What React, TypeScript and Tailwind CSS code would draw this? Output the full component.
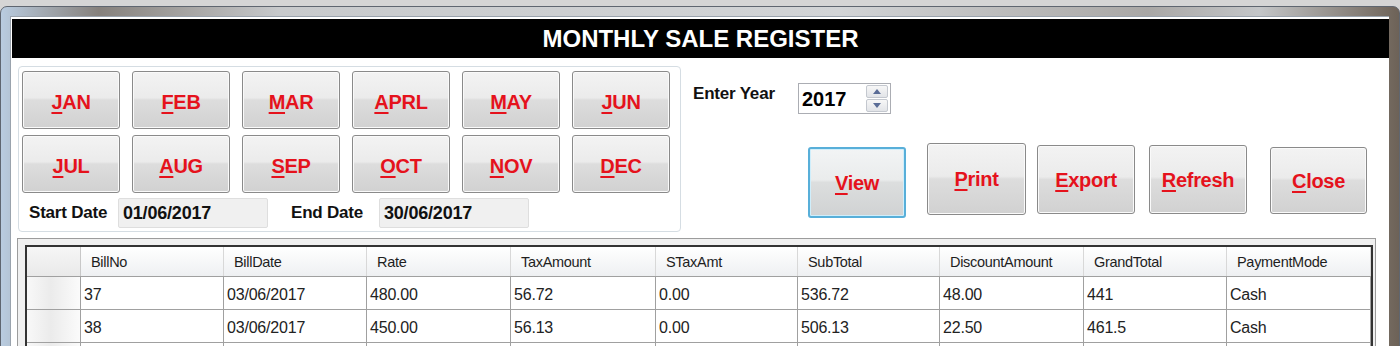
import React from "react";

const months = [
  ["J", "AN"], ["F", "EB"], ["M", "AR"], ["A", "PRL"], ["M", "AY"], ["J", "UN"],
  ["J", "UL"], ["A", "UG"], ["S", "EP"], ["O", "CT"], ["N", "OV"], ["D", "EC"],
];

const columns = ["BillNo", "BillDate", "Rate", "TaxAmount", "STaxAmt", "SubTotal", "DiscountAmount", "GrandTotal", "PaymentMode"];

const rows = [
  ["37", "03/06/2017", "480.00", "56.72", "0.00", "536.72", "48.00", "441", "Cash"],
  ["38", "03/06/2017", "450.00", "56.13", "0.00", "506.13", "22.50", "461.5", "Cash"],
  ["", "", "", "", "", "", "", "", ""],
];

const btn =
  "flex items-center justify-center rounded-[3px] border border-[#8a8a8a] bg-[linear-gradient(to_bottom,#f3f3f3_0%,#ebebeb_46%,#dddddd_50%,#d1d1d1_100%)] shadow-[inset_0_0_0_1px_#fafafa] text-[20px] font-bold text-[#e5121c]";

function Mnemonic({ first, rest }: { first: string; rest: string }) {
  return (
    <span className="tracking-[-0.3px]">
      <span className="underline decoration-[1.5px] underline-offset-[3px]">{first}</span>
      {rest}
    </span>
  );
}

function Spinner() {
  return (
    <div className="flex h-[27px] w-[22px] flex-col gap-[1px]">
      {[0, 1].map((i) => (
        <div
          key={i}
          className="flex flex-1 items-center justify-center rounded-[2px] border border-[#c4c8cf] bg-[linear-gradient(to_bottom,#f7f7f7,#e2e4e8)]"
        >
          <svg width="8" height="5" viewBox="0 0 8 5">
            {i === 0 ? (
              <polygon points="0,5 8,5 4,0" fill="#5a6c96" />
            ) : (
              <polygon points="0,0 8,0 4,5" fill="#5a6c96" />
            )}
          </svg>
        </div>
      ))}
    </div>
  );
}

export default function App() {
  return (
    <div className="h-[346px] w-[1400px] overflow-hidden bg-[#d5d5d5] pt-[6px] font-['Liberation_Sans',Arial,sans-serif]">
      <div className="h-[360px] rounded-t-[7px] border border-[#5f6670] bg-[linear-gradient(to_right,#b9cce0_0%,#a3aab2_3%,#86817c_7%,#c8cacc_20%,#d2d4d6_60%,#a9a7a5_82%,#c4c6c8_90%,#6d6257_100%)] pl-[9px] pr-[10px] pt-[9px]">
        <div className="h-full border-l border-t border-[#9aa3ad] bg-white pl-[1px] pt-[2px]">
          <div className="flex h-[39px] items-center justify-center bg-black text-[24px] font-bold text-white">
            MONTHLY SALE REGISTER
          </div>

          <div className="ml-[6px] mt-[8px] flex">
            <div className="h-[166px] w-[663px] rounded-[4px] border border-[#d5dde3] pl-[3px] pt-[4px]">
              <div className="grid grid-cols-[repeat(6,98px)] gap-x-[12px] gap-y-[6px]">
                {months.map(([f, r], i) => (
                  <button key={i} className={`${btn} h-[58px] pt-[3px]`}>
                    <Mnemonic first={f} rest={r} />
                  </button>
                ))}
              </div>
              <div className="mt-[5px] flex items-center text-[17px] font-bold tracking-[-0.2px] text-[#111]">
                <span className="ml-[7px] w-[89px]">Start Date</span>
                <div className="flex h-[30px] w-[150px] items-center rounded-[2px] border border-[#dedede] bg-[#f0f0f0] pl-[4px] text-[18px]">
                  01/06/2017
                </div>
                <span className="ml-[23px] w-[88px]">End Date</span>
                <div className="flex h-[30px] w-[150px] items-center rounded-[2px] border border-[#dedede] bg-[#f0f0f0] pl-[4px] text-[18px]">
                  30/06/2017
                </div>
              </div>
            </div>

            <div className="ml-[12px] flex flex-col">
              <div className="mt-[17px] flex items-start">
                <span className="mt-[1px] w-[105px] text-[17px] font-bold leading-[20px] tracking-[-0.2px] text-[#111]">Enter Year</span>
                <div className="flex h-[31px] w-[93px] items-center justify-between border border-[#abadb3] bg-white pl-[3px] pr-[2px] text-[20px] font-bold text-black">
                  2017
                  <Spinner />
                </div>
              </div>
              <div className="flex items-start">
                <button className="ml-[115px] mt-[33px] flex h-[71px] w-[98px] items-center justify-center rounded-[3px] border-2 border-[#58afd9] bg-[linear-gradient(to_bottom,#f2f4f5_0%,#eaecec_46%,#dcdede_50%,#d0d2d3_100%)] shadow-[inset_0_0_0_1px_#cfeefb] text-[20px] font-bold text-[#e5121c]">
                  <Mnemonic first="V" rest="iew" />
                </button>
                <button className={`${btn} ml-[21px] mt-[29px] h-[72px] w-[99px]`}>
                  <Mnemonic first="P" rest="rint" />
                </button>
                <button className={`${btn} ml-[11px] mt-[31px] h-[69px] w-[98px]`}>
                  <Mnemonic first="E" rest="xport" />
                </button>
                <button className={`${btn} ml-[14px] mt-[31px] h-[69px] w-[98px]`}>
                  <Mnemonic first="R" rest="efresh" />
                </button>
                <button className={`${btn} ml-[23px] mt-[33px] h-[67px] w-[97px]`}>
                  <Mnemonic first="C" rest="lose" />
                </button>
              </div>
            </div>
          </div>

          <div className="ml-[5px] mt-[6px] h-[140px] w-[1359px] border-l border-t border-r border-[#9c9c9c] bg-[#f0f0f0] pl-[7px] pt-[6px]">
            <div className="w-[1348px] border-l-2 border-r-2 border-t-2 border-[#333] bg-white">
              <div className="grid h-[30px] grid-cols-[54px_143px_143px_144px_145px_142px_142px_144px_143px_144px] border-b border-[#a0a0a0]">
                <div className="border-r border-[#c8c8c8] bg-[linear-gradient(to_bottom,#f6f6f6,#e9e9e9)]" />
                {columns.map((c) => (
                  <div
                    key={c}
                    className="flex items-center border-r border-[#d8d8d8] bg-[linear-gradient(to_bottom,#ffffff,#eef0f2)] pl-[10px] pt-[3px] text-[14.5px] tracking-[-0.3px] text-[#1e1e1e]"
                  >
                    {c}
                  </div>
                ))}
              </div>
              {rows.map((r, ri) => (
                <div
                  key={ri}
                  className="grid h-[33px] grid-cols-[54px_143px_143px_144px_145px_142px_142px_144px_143px_144px] border-b border-[#a0a0a0]"
                >
                  <div className="border-r border-[#a0a0a0] bg-[linear-gradient(to_right,#f8f8f8,#ebebeb_45%,#fbfbfb)]" />
                  {r.map((v, i) => (
                    <div
                      key={i}
                      className="flex items-center border-r border-[#a0a0a0] pl-[3px] pt-[3px] text-[16px] tracking-[-0.2px] text-[#222]"
                    >
                      {v}
                    </div>
                  ))}
                </div>
              ))}
            </div>
          </div>
        </div>
      </div>
    </div>
  );
}
